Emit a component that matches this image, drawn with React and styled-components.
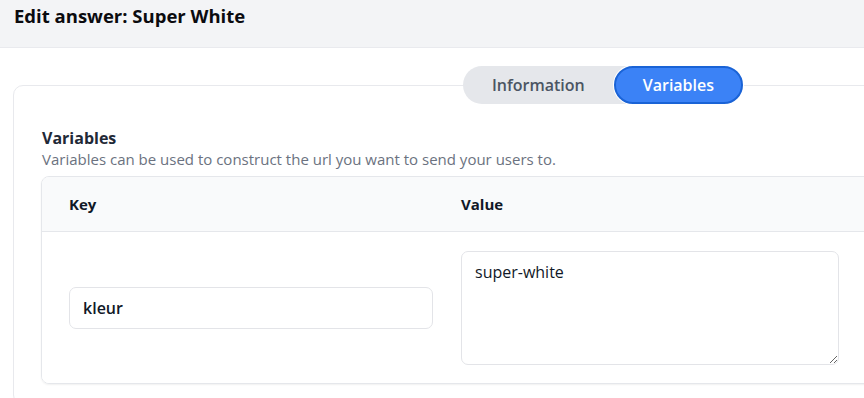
import React from "react";
import styled, { createGlobalStyle } from "styled-components";

const GlobalStyle = createGlobalStyle`
  html, body {
    margin: 0;
    padding: 0;
    background: #ffffff;
    overflow: hidden;
  }
  body {
    font-family: "Open Sans", "Liberation Sans", sans-serif;
    color: #111827;
  }
`;

const Header = styled.header`
  height: 47px;
  background: #f3f4f6;
  border-bottom: 1px solid #e9eaee;
  padding: 0 14px;
  display: flex;
  align-items: flex-start;
`;

const Title = styled.h1`
  margin: 3px 0 0;
  font-size: 18.5px;
  font-weight: 700;
  color: #0b0b0f;
`;

const Main = styled.main`
  padding: 37px 0 0 13px;
`;

const Card = styled.section`
  width: 1180px;
  border: 1px solid #e8e9ed;
  border-radius: 10px;
  padding: 0 0 20px 27px;
`;

const TabRow = styled.div`
  display: flex;
  justify-content: center;
  margin-top: -20px;
  padding-right: 56px;
`;

const Tabs = styled.div`
  display: flex;
  background: #e5e7eb;
  border-radius: 20px;
`;

const Tab = styled.button`
  font-family: inherit;
  font-size: 16px;
  font-weight: 600;
  height: 38px;
  border-radius: 20px;
  cursor: pointer;
  padding: 0 27px;
  border: 2px solid ${(p) => (p.$active ? "#1a63d6" : "transparent")};
  background: ${(p) => (p.$active ? "#3b82f6" : "transparent")};
  color: ${(p) => (p.$active ? "#ffffff" : "#4b5563")};
  box-shadow: ${(p) => (p.$active ? "0 0 0 1px #ffffff" : "none")};
`;

const SectionTitle = styled.h2`
  margin: 23px 0 0 1px;
  font-size: 16px;
  font-weight: 700;
  color: #1f2937;
`;

const SectionText = styled.p`
  margin: 0 0 7px 1px;
  font-size: 15px;
  color: #6b7280;
`;

const Table = styled.div`
  border: 1px solid #e5e7eb;
  border-radius: 8px;
  box-shadow: 0 1px 2px rgba(0, 0, 0, 0.06);
  overflow: hidden;
`;

const Row = styled.div`
  display: grid;
  grid-template-columns: 392px 429px 1fr;
  align-items: center;
  background: ${(p) => (p.$head ? "#f9fafb" : "#ffffff")};
  border-bottom: ${(p) => (p.$head ? "1px solid #e5e7eb" : "none")};
  height: ${(p) => (p.$head ? "54px" : "151px")};
`;

const HeadCell = styled.div`
  padding-left: 27px;
  font-size: 15px;
  font-weight: 700;
  color: #111827;
`;

const Cell = styled.div`
  padding-left: 27px;
`;

const Input = styled.input`
  box-sizing: border-box;
  width: 364px;
  height: 42px;
  border: 1px solid #e3e4e8;
  border-radius: 7px;
  padding: 0 13px;
  font-family: inherit;
  font-size: 16px;
  font-weight: 600;
  color: #111827;
  outline: none;
`;

const TextArea = styled.textarea`
  box-sizing: border-box;
  display: block;
  width: 378px;
  height: 114px;
  border: 1px solid #e3e4e8;
  border-radius: 7px;
  padding: 9px 13px;
  font-family: inherit;
  font-size: 16px;
  font-weight: 500;
  color: #111827;
  outline: none;
`;

export default function App() {
  return (
    <>
      <GlobalStyle />
      <Header>
        <Title>Edit answer: Super White</Title>
      </Header>
      <Main>
        <Card>
          <TabRow>
            <Tabs>
              <Tab>Information</Tab>
              <Tab $active>Variables</Tab>
            </Tabs>
          </TabRow>
          <SectionTitle>Variables</SectionTitle>
          <SectionText>
            Variables can be used to construct the url you want to send your
            users to.
          </SectionText>
          <Table>
            <Row $head>
              <HeadCell>Key</HeadCell>
              <HeadCell>Value</HeadCell>
              <HeadCell />
            </Row>
            <Row>
              <Cell>
                <Input defaultValue="kleur" />
              </Cell>
              <Cell>
                <TextArea defaultValue="super-white" />
              </Cell>
              <Cell>
                <Input defaultValue="" />
              </Cell>
            </Row>
          </Table>
        </Card>
      </Main>
    </>
  );
}
